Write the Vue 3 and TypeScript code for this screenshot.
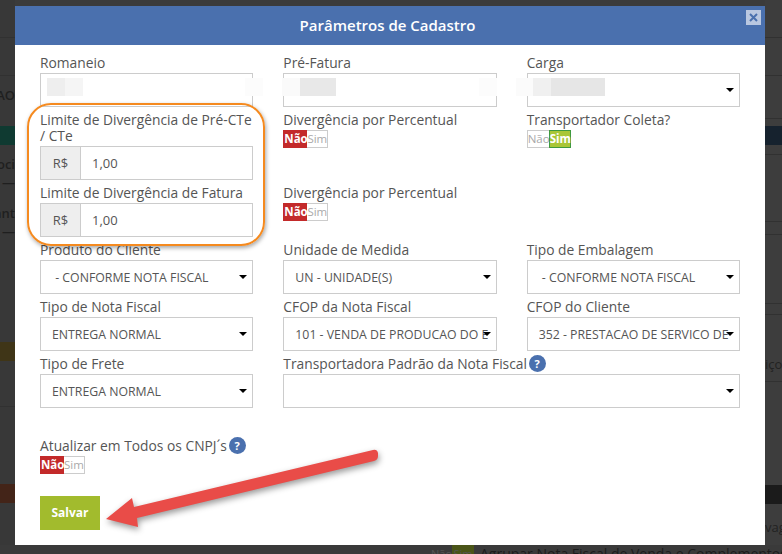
<script setup lang="ts">
interface Strip {
  h: number
  tone?: string
  text?: string
  line?: boolean
}

const leftStrips: Strip[] = [
  { h: 38, line: true },
  { h: 38, line: true },
  { h: 11 },
  { h: 16, text: 'AO' },
  { h: 23 },
  { h: 19, tone: 'teal' },
  { h: 10 },
  { h: 18, text: 'oci' },
  { h: 18, text: '—' },
  { h: 13 },
  { h: 18, text: 'ant' },
  { h: 18, text: '—' },
  { h: 102 },
  { h: 19, tone: 'olive' },
  { h: 46, line: true },
  { h: 77 },
  { h: 19, tone: 'rust' },
  { h: 40 },
]

const rightStrips: Strip[] = [
  { h: 38, line: true },
  { h: 38, line: true },
  { h: 43, line: true },
  { h: 7 },
  { h: 19, tone: 'navy' },
  { h: 10, line: true },
  { h: 67, line: true },
  { h: 13, line: true },
  { h: 69, line: true },
  { h: 11, line: true },
  { h: 40 },
  { h: 18, text: 'iço' },
  { h: 9, line: true },
  { h: 103 },
  { h: 19, tone: 'black' },
  { h: 15 },
  { h: 16, text: 'vag' },
]

const selectRows = [
  { label: 'Produto do Cliente', value: '\u00a0- CONFORME NOTA FISCAL', first: true },
  { label: 'Unidade de Medida', value: 'UN - UNIDADE(S)' },
  { label: 'Tipo de Embalagem', value: '\u00a0- CONFORME NOTA FISCAL' },
  { label: 'Tipo de Nota Fiscal', value: 'ENTREGA NORMAL' },
  { label: 'CFOP da Nota Fiscal', value: '101 - VENDA DE PRODUCAO DO ESTABELECIMENTO' },
  { label: 'CFOP do Cliente', value: '352 - PRESTACAO DE SERVICO DE TRANSPORTE' },
]
</script>

<template>
  <div class="page">
    <div class="backdrop">
      <div class="side side-left">
        <div
          v-for="(s, i) in leftStrips"
          :key="i"
          class="strip"
          :class="[s.tone, { line: s.line }]"
          :style="{ height: s.h + 'px' }"
        >{{ s.text }}</div>
      </div>
      <div class="side side-right">
        <div
          v-for="(s, i) in rightStrips"
          :key="i"
          class="strip"
          :class="[s.tone, { line: s.line }]"
          :style="{ height: s.h + 'px' }"
        >{{ s.text }}</div>
      </div>
    </div>
    <div class="footer-strip">
      <span class="dim-toggle"><span>Não</span><b>Sim</b></span>
      <span class="dim-text">Agrupar Nota Fiscal de Venda e Complementos</span>
    </div>

    <div class="modal">
      <header class="modal-head">
        <h1>Parâmetros de Cadastro</h1>
        <button class="close" type="button" aria-label="Fechar">
          <svg width="9" height="9" viewBox="0 0 9 9"><path d="M1 1l7 7M8 1l-7 7" stroke="#4a70ae" stroke-width="2" /></svg>
        </button>
      </header>

      <form class="form" @submit.prevent>
        <div class="field">
          <label>Romaneio</label>
          <div class="select-box">
            <span class="smudge" style="left: 6px; width: 18px; background: #eeeeee" />
            <span class="smudge" style="left: 24px; width: 18px; background: #f5f5f5" />
            <span class="smudge" style="left: 204px; width: 18px; background: #fcfcfc" />
          </div>
        </div>
        <div class="field">
          <label>Pré-Fatura</label>
          <div class="select-box">
            <span class="smudge" style="left: -2px; width: 18px; background: #fafafa" />
            <span class="smudge" style="left: 16px; width: 36px; background: #e8e8e8" />
            <span class="smudge" style="left: 195px; width: 18px; background: #fcfcfc" />
          </div>
        </div>
        <div class="field">
          <label>Carga</label>
          <div class="select-box has-arrow">
            <span class="smudge" style="left: -12px; width: 18px; background: #fbfbfb" />
            <span class="smudge" style="left: 5px; width: 18px; background: #f0f0f0" />
            <span class="smudge" style="left: 23px; width: 54px; background: #e6e6e6" />
          </div>
        </div>

        <div class="field">
          <label>Limite de Divergência de Pré-CTe / CTe</label>
          <div class="money"><span class="addon">R$</span><input type="text" value="1,00" /></div>
        </div>
        <div class="field">
          <label>Divergência por Percentual</label>
          <div class="toggle"><span class="no on">Não</span><span class="yes">Sim</span></div>
        </div>
        <div class="field">
          <label>Transportador Coleta?</label>
          <div class="toggle"><span class="no">Não</span><span class="yes on">Sim</span></div>
        </div>

        <div class="field">
          <label>Limite de Divergência de Fatura</label>
          <div class="money"><span class="addon">R$</span><input type="text" value="1,00" /></div>
        </div>
        <div class="field">
          <label>Divergência por Percentual</label>
          <div class="toggle"><span class="no on">Não</span><span class="yes">Sim</span></div>
        </div>

        <div v-for="row in selectRows" :key="row.label" class="field" :class="{ first: row.first }">
          <label>{{ row.label }}</label>
          <div class="select-box has-arrow"><span class="value">{{ row.value }}</span></div>
        </div>

        <div class="field first">
          <label>Tipo de Frete</label>
          <div class="select-box has-arrow"><span class="value">ENTREGA NORMAL</span></div>
        </div>
        <div class="field wide">
          <label>Transportadora Padrão da Nota Fiscal <span class="help">?</span></label>
          <div class="select-box has-arrow" />
        </div>

        <div class="field all-cnpj">
          <label>Atualizar em Todos os CNPJ´s <span class="help">?</span></label>
          <div class="toggle"><span class="no on">Não</span><span class="yes">Sim</span></div>
        </div>

        <div class="actions">
          <button class="save" type="submit">Salvar</button>
        </div>
      </form>

      <div class="ring" />
      <svg class="arrow" width="750" height="539" viewBox="0 0 750 539">
        <path
          d="M91 513 L117 492 L119 501 L358 444 Q362 443 363 447 L363 450 Q363 454 359 455 L122 512 L123 521 Z"
          fill="#e94c48"
        />
      </svg>
    </div>
  </div>
</template>

<style>
html,
body {
  margin: 0;
  background: #3b3b3b;
}
</style>

<style scoped>
.page {
  position: relative;
  width: 782px;
  height: 554px;
  overflow: hidden;
  background: #3b3b3b;
  font-family: "Open Sans", sans-serif;
}
.backdrop {
  display: flex;
  justify-content: space-between;
  height: 545px;
}
.side {
  overflow: hidden;
  color: #1f1f1f;
  font-size: 13px;
  font-weight: 600;
}
.side-left {
  width: 15px;
  background: #383838;
}
.side-right {
  width: 17px;
  background: #3d3d3d;
  color: #222;
  font-weight: 400;
}
.strip {
  display: flex;
  align-items: center;
  box-sizing: border-box;
  white-space: nowrap;
}
.side-left .strip {
  justify-content: flex-end;
}
.strip.line {
  border-bottom: 1px solid #313131;
}
.strip.teal {
  background: #0f3a31;
}
.strip.olive {
  background: #3f3517;
}
.strip.rust {
  background: #432418;
}
.strip.navy {
  background: #16222e;
}
.strip.black {
  background: #1b1b1b;
}
.footer-strip {
  display: flex;
  align-items: flex-start;
  gap: 6px;
  height: 9px;
  padding-left: 431px;
  background: #3a3a3a;
  overflow: hidden;
  color: #1c1c1c;
  font-size: 14px;
  line-height: 18px;
}
.dim-toggle {
  display: flex;
  font-size: 11px;
  color: #555;
}
.dim-toggle span {
  width: 21px;
  text-align: center;
}
.dim-toggle b {
  width: 22px;
  background: #4a5518;
  text-align: center;
  font-weight: 400;
}
.dim-text {
  white-space: nowrap;
}

.modal {
  position: absolute;
  left: 15px;
  top: 6px;
  width: 750px;
  height: 539px;
  background: #fff;
  color: #555;
}
.modal-head {
  position: relative;
  height: 39px;
  padding-right: 5px;
  background: #4a70ae;
  color: #fff;
}
.modal-head h1 {
  margin: 0;
  font-size: 15px;
  font-weight: 600;
  line-height: 39px;
  text-align: center;
}
.close {
  position: absolute;
  top: 4px;
  right: 4px;
  display: flex;
  align-items: center;
  justify-content: center;
  width: 15px;
  height: 15px;
  padding: 0;
  border: 0;
  background: #b9c7e0;
}
.form {
  display: grid;
  grid-template-columns: repeat(3, 1fr);
  column-gap: 30px;
  padding: 5px 25px 0;
}
.field {
  min-width: 0;
}
.field.first {
  grid-column-start: 1;
}
.field.wide {
  grid-column: 2 / span 2;
}
.field label {
  display: block;
  margin: 5px 0 2px;
  font-size: 13.8px;
  line-height: 16px;
}
.help {
  display: inline-block;
  width: 17px;
  height: 17px;
  margin: -1px 0 0 -2px;
  border-radius: 50%;
  background: #4a70ae;
  color: #fff;
  font-size: 11px;
  font-weight: 700;
  line-height: 17px;
  text-align: center;
  vertical-align: top;
}
.select-box {
  position: relative;
  box-sizing: border-box;
  height: 34px;
  padding: 0 12px 0 11px;
  border: 1px solid #ccc;
  font-size: 12.3px;
  line-height: 33px;
  white-space: nowrap;
}
.select-box .value {
  display: block;
  overflow: hidden;
  margin-right: -4px;
}
.select-box.has-arrow::after {
  content: "";
  position: absolute;
  top: 14px;
  right: 5px;
  border-style: solid;
  border-width: 4px 4px 0;
  border-color: #000 transparent transparent;
}
.smudge {
  position: absolute;
  top: 4px;
  height: 18px;
}
.money {
  display: flex;
  height: 34px;
  box-sizing: border-box;
  border: 1px solid #ccc;
}
.addon {
  flex: none;
  box-sizing: border-box;
  width: 40px;
  border-right: 1px solid #ccc;
  background: #eee;
  font-size: 13px;
  line-height: 32px;
  text-align: center;
}
.money input {
  flex: 1;
  min-width: 0;
  padding: 0 11px;
  border: 0;
  outline: 0;
  color: #555;
  font: 13px "Open Sans", sans-serif;
}
.toggle {
  display: flex;
  width: 45px;
  height: 18px;
  font-size: 11.5px;
  line-height: 16px;
  text-align: center;
  color: #aaa;
}
.toggle span {
  box-sizing: border-box;
  border: 1px solid #ccc;
}
.toggle .no {
  width: 24px;
  border-right: 0;
}
.toggle .yes {
  width: 21px;
  border-left: 0;
}
.toggle .no.on {
  border-color: #c32a2a;
  background: #c32a2a;
  color: #fff;
  font-weight: 700;
}
.toggle .yes.on {
  width: 22px;
  border: 1px solid #3f9a3f;
  background: #a9c637;
  color: #fff;
  font-weight: 700;
}
.toggle .no:not(.on) {
  width: 22px;
}
.all-cnpj {
  grid-column: 1 / -1;
  margin-top: 25px;
}
.actions {
  grid-column: 1 / -1;
  margin-top: 22px;
}
.save {
  width: 60px;
  height: 34px;
  padding: 0 0 2px;
  border: 0;
  background: #a2bb2d;
  color: #fff;
  font: 700 12px "Open Sans", sans-serif;
}
.ring {
  position: absolute;
  left: 12px;
  top: 97px;
  box-sizing: border-box;
  width: 238px;
  height: 143px;
  border: 2px solid #f58a1f;
  border-radius: 24px;
  box-shadow: 1px 2px 4px rgba(0, 0, 0, 0.35);
  pointer-events: none;
}
.arrow {
  position: absolute;
  left: 0;
  top: 0;
  pointer-events: none;
  filter: drop-shadow(1px 3px 3px rgba(0, 0, 0, 0.4));
}
</style>
